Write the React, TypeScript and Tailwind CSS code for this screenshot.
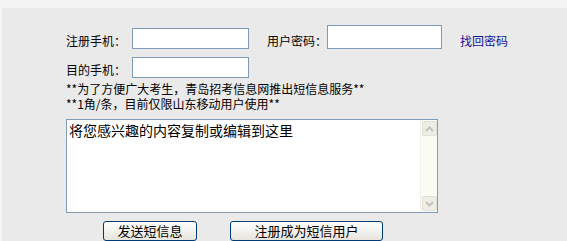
import React from "react";

const font = { fontFamily: '"Noto Sans CJK SC", "Noto Sans", sans-serif' };

function ScrollBtn({ up }: { up: boolean }) {
  return (
    <div className="w-[15px] h-[15px] mx-auto border border-[#e2e1d6] bg-[#efeee6] rounded-[2px] flex items-center justify-center">
      <svg width="9" height="6" viewBox="0 0 9 6">
        {up ? (
          <path d="M1 5 L4.5 1.5 L8 5" stroke="#c4c3b8" strokeWidth="2" fill="none" />
        ) : (
          <path d="M1 1 L4.5 4.5 L8 1" stroke="#c4c3b8" strokeWidth="2" fill="none" />
        )}
      </svg>
    </div>
  );
}

export default function App() {
  return (
    <div
      className="w-[567px] h-[241px] bg-[#f4f4f4] pt-[8px] pl-[2px] overflow-hidden text-black"
      style={font}
    >
      <div className="h-full bg-[#eaeaea] pl-[64px] pt-[17px] text-[12px]">
        <div className="flex items-end h-[24px]">
          <div className="w-[66px] leading-[17px]">注册手机：</div>
          <div className="w-[117px] h-[21px] border border-[#7f9db9] bg-white" />
          <div className="ml-[18px] w-[60px] leading-[17px]">用户密码：</div>
          <div className="w-[115px] h-[24px] border border-[#7f9db9] bg-white" />
          <div className="ml-[18px] leading-[17px] text-[#12129a]">找回密码</div>
        </div>
        <div className="flex items-end h-[21px] mt-[8px]">
          <div className="w-[66px] leading-[17px]">目的手机：</div>
          <div className="w-[117px] h-[21px] border border-[#7f9db9] bg-white" />
        </div>
        <div className="mt-[3px] leading-[15px]">
          <div>**为了方便广大考生，青岛招考信息网推出短信息服务**</div>
          <div>**1角/条，目前仅限山东移动用户使用**</div>
        </div>
        <div className="mt-[8px] w-[372px] h-[94px] border border-[#7f9db9] bg-white flex">
          <div className="flex-1 pl-[2px] pt-[1px] text-[14px] leading-[18px]">
            将您感兴趣的内容复制或编辑到这里
          </div>
          <div className="w-[17px] h-full bg-[#fcfcf7] border-l border-[#f0efe8] flex flex-col justify-between py-[1px]">
            <ScrollBtn up />
            <ScrollBtn up={false} />
          </div>
        </div>
        <div className="flex mt-[8px] text-[13px]">
          <button
            className="ml-[37px] w-[94px] h-[20px] border border-[#003c74] rounded-[3px] bg-gradient-to-b from-white to-[#e6e4dc] leading-[18px] text-center"
            style={font}
          >
            发送短信息
          </button>
          <button
            className="ml-[33px] w-[153px] h-[20px] border border-[#003c74] rounded-[3px] bg-gradient-to-b from-white to-[#e6e4dc] leading-[18px] text-center"
            style={font}
          >
            注册成为短信用户
          </button>
        </div>
      </div>
    </div>
  );
}
